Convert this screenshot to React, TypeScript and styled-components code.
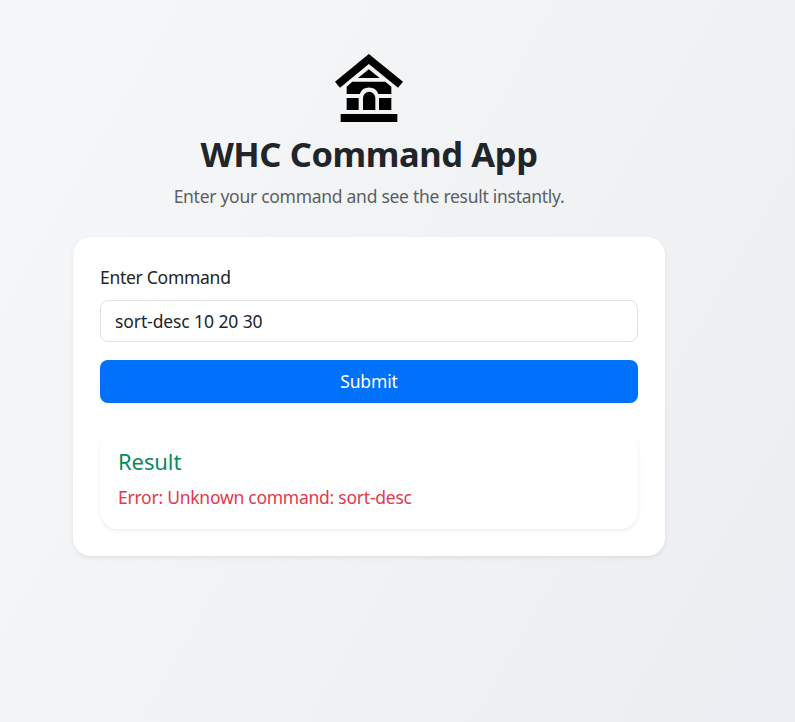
import React, { useState } from "react";
import styled, { createGlobalStyle } from "styled-components";

const GlobalStyle = createGlobalStyle`
  *, *::before, *::after { box-sizing: border-box; }
  body {
    margin: 0;
    min-height: 722px;
    background: linear-gradient(120deg, #f5f7f9 0%, #f1f3f5 45%, #eef0f2 75%, #ebeef2 100%);
    color: #212529;
    font-family: "Noto Sans", sans-serif;
    font-size: 17.5px;
    font-weight: 370;
    line-height: 27px;
  }
`;

const Page = styled.main`
  width: 738px;
  min-height: 722px;
  padding-top: 44px;
  display: flex;
  flex-direction: column;
  align-items: center;
`;

const Logo = styled.svg`
  display: block;
  width: 90px;
  height: 90px;
`;

const Title = styled.h1`
  margin: -2px 0 0;
  font-size: 34.5px;
  line-height: 43px;
  font-weight: 700;
  letter-spacing: -0.4px;
  white-space: nowrap;
`;

const Subtitle = styled.p`
  margin: 8px 0 0;
  color: #5b6064;
  letter-spacing: -0.28px;
  white-space: nowrap;
`;

const Card = styled.section`
  width: 592px;
  height: 319px;
  margin-top: 27px;
  padding: 27px;
  display: flex;
  flex-direction: column;
  background: #fff;
  border-radius: 18px;
  box-shadow: 0 2px 4.5px rgba(0, 0, 0, 0.075);
`;

const Form = styled.form`
  display: flex;
  flex-direction: column;
`;

const Label = styled.label`
  margin-bottom: 9px;
  letter-spacing: -0.28px;
`;

const Input = styled.input`
  width: 100%;
  height: 42px;
  padding: 0 14px 1px;
  border: 1px solid #dee2e6;
  border-radius: 8px;
  background: #fff;
  color: #212529;
  font: inherit;
  letter-spacing: -0.1px;
  outline: none;
`;

const Button = styled.button`
  height: 43px;
  margin-top: 18px;
  padding: 0;
  border: 0;
  border-radius: 8px;
  background: #0071fa;
  color: #fff;
  font: inherit;
  letter-spacing: -0.15px;
`;

const ResultCard = styled.div`
  height: 99px;
  margin-top: 27px;
  padding: 18px;
  border-radius: 18px;
  background: #fff;
  box-shadow: 0 2px 4.5px rgba(0, 0, 0, 0.075);
`;

const ResultTitle = styled.h2`
  margin: 0 0 9px;
  color: #0c8a58;
  font-size: 22px;
  line-height: 27px;
  font-weight: 370;
  letter-spacing: -0.1px;
`;

const ErrorText = styled.p`
  margin: 0;
  color: #e4384d;
  letter-spacing: -0.25px;
`;

export default function App() {
  const [command, setCommand] = useState("sort-desc 10 20 30");
  return (
    <>
      <GlobalStyle />
      <Page>
        <Logo viewBox="0 0 270 270" aria-hidden="true">
          <path d="M134.5 30 237 113 222 131 134.5 60 48 131 33 113Z" />
          <path d="M134.5 76 167 102H102Z" />
          <path d="M85 113H184L202 128V150H163A30 30 0 0 0 107 150H68V128Z" />
          <path d="M68 162H104V198H68ZM165 162H202V198H165Z" />
          <path d="M117 198V162A18.5 18.5 0 0 1 154 162V198Z" />
          <path d="M50 210H220V234H50Z" />
        </Logo>
        <Title>WHC Command App</Title>
        <Subtitle>Enter your command and see the result instantly.</Subtitle>
        <Card>
          <Form onSubmit={(e) => e.preventDefault()}>
            <Label htmlFor="command">Enter Command</Label>
            <Input id="command" value={command} onChange={(e) => setCommand(e.target.value)} />
            <Button type="submit">Submit</Button>
          </Form>
          <ResultCard>
            <ResultTitle>Result</ResultTitle>
            <ErrorText>Error: Unknown command: sort-desc</ErrorText>
          </ResultCard>
        </Card>
      </Page>
    </>
  );
}
